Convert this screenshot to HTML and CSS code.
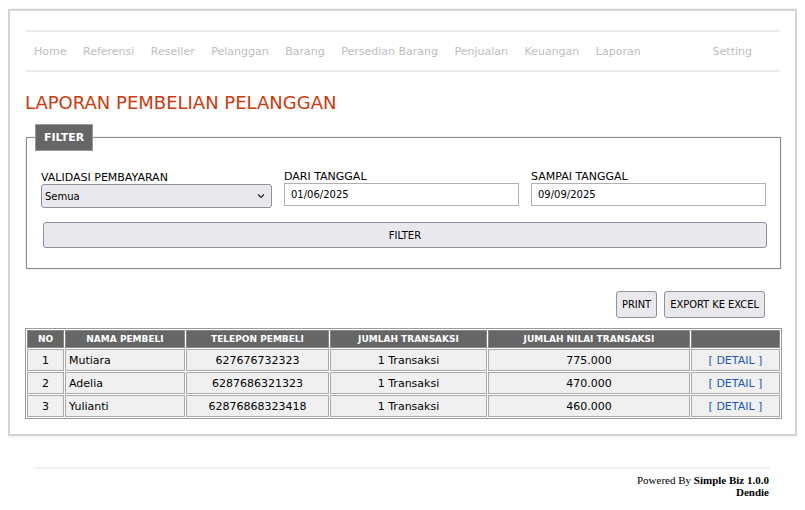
FILE: index.html
```html
<!DOCTYPE html>
<html>
<head>
<meta charset="utf-8">
<link rel="stylesheet" href="styles.css">
</head>
<body>
<div class="page">
  <nav class="nav">
    <a class="nav-item">Home</a>
    <a class="nav-item">Referensi</a>
    <a class="nav-item">Reseller</a>
    <a class="nav-item">Pelanggan</a>
    <a class="nav-item">Barang</a>
    <a class="nav-item">Persedian Barang</a>
    <a class="nav-item">Penjualan</a>
    <a class="nav-item">Keuangan</a>
    <a class="nav-item">Laporan</a>
    <a class="nav-item nav-right">Setting</a>
  </nav>

  <h1 class="title">LAPORAN PEMBELIAN PELANGGAN</h1>

  <fieldset class="filter">
    <legend class="legend">FILTER</legend>
    <div class="filter-grid">
      <label class="field">
        <span class="field-label">VALIDASI PEMBAYARAN</span>
        <span class="select">Semua<svg class="chev" width="8" height="6" viewBox="0 0 8 6"><path d="M1 1.5 L4 4.5 L7 1.5" fill="none" stroke="#222" stroke-width="1.2"/></svg></span>
      </label>
      <label class="field">
        <span class="field-label">DARI TANGGAL</span>
        <span class="input">01/06/2025</span>
      </label>
      <label class="field">
        <span class="field-label">SAMPAI TANGGAL</span>
        <span class="input">09/09/2025</span>
      </label>
    </div>
    <button class="btn btn-wide">FILTER</button>
  </fieldset>

  <div class="actions">
    <button class="btn btn-small">PRINT</button>
    <button class="btn btn-small">EXPORT KE EXCEL</button>
  </div>

  <table class="report">
    <thead>
      <tr>
        <th class="c-no">NO</th>
        <th class="c-nama">NAMA PEMBELI</th>
        <th class="c-tel">TELEPON PEMBELI</th>
        <th class="c-jml">JUMLAH TRANSAKSI</th>
        <th class="c-nilai">JUMLAH NILAI TRANSAKSI</th>
        <th class="c-act"></th>
      </tr>
    </thead>
    <tbody>
      <tr>
        <td class="center">1</td>
        <td>Mutiara</td>
        <td class="center">627676732323</td>
        <td class="center">1 Transaksi</td>
        <td class="center">775.000</td>
        <td class="center"><a class="link">[ DETAIL ]</a></td>
      </tr>
      <tr>
        <td class="center">2</td>
        <td>Adelia</td>
        <td class="center">6287686321323</td>
        <td class="center">1 Transaksi</td>
        <td class="center">470.000</td>
        <td class="center"><a class="link">[ DETAIL ]</a></td>
      </tr>
      <tr>
        <td class="center">3</td>
        <td>Yulianti</td>
        <td class="center">62876868323418</td>
        <td class="center">1 Transaksi</td>
        <td class="center">460.000</td>
        <td class="center"><a class="link">[ DETAIL ]</a></td>
      </tr>
    </tbody>
  </table>
</div>

<footer class="footer">
  <div>Powered By <b>Simple Biz 1.0.0</b></div>
  <div><b>Dendie</b></div>
</footer>
</body>
</html>
```

FILE: styles.css
```css
body {
  margin: 8px;
  font-family: "DejaVu Sans", Verdana, sans-serif;
  font-size: 11px;
  color: #000;
  background: #fff;
}

.page {
  border: 2px solid #d4d4d4;
  box-shadow: 0 0 4px rgba(0,0,0,0.12);
  padding: 19px 15px 15px 15px;
  margin-top: 1px;
}

.nav {
  display: flex;
  align-items: center;
  height: 38px;
  border-top: 2px solid #ececec;
  border-bottom: 2px solid #ececec;
  padding: 0 28px 0 9px;
  gap: 16.5px;
}

.nav-item {
  color: #bdbdbd;
  font-size: 11px;
}

.nav-right {
  margin-left: auto;
}

.title {
  margin: 21px 0 0 0;
  font-size: 18px;
  font-weight: normal;
  color: #cc3a0c;
  line-height: 20px;
}

.filter {
  margin: 11px 0 0 1px;
  border: 1px solid #8a8a8a;
  box-shadow: 0 0 2px rgba(0,0,0,0.15);
  padding: 19px 14px 20px 14px;
}

.legend {
  background: #666;
  color: #fff;
  font-weight: bold;
  font-size: 11px;
  padding: 6px 8px 6px 8px;
  margin-left: -6px;
  border: 1px solid #999;
}

.filter-grid {
  display: grid;
  grid-template-columns: 231px 235px 235px;
  gap: 12px;
  align-items: end;
}

.field {
  display: flex;
  flex-direction: column;
}

.field-label {
  font-size: 11px;
  line-height: 13px;
}

.select {
  display: flex;
  align-items: center;
  justify-content: space-between;
  height: 22px;
  padding: 0 6px 0 3px;
  background: #e9e9ed;
  border: 1px solid #8f8f9d;
  border-radius: 3px;
  font-size: 10px;
  margin-bottom: -2px;
}

.input {
  display: flex;
  align-items: center;
  height: 21px;
  padding: 0 6px;
  border: 1px solid #b0b0b0;
  font-size: 10px;
}

.btn {
  font-family: inherit;
  font-size: 10px;
  background: #e9e9ed;
  border: 1px solid #8f8f9d;
  border-radius: 3px;
  color: #000;
}

.btn-wide {
  display: block;
  width: calc(100% - 1px);
  height: 26px;
  margin: 16px 0 0 2px;
}

.actions {
  display: flex;
  justify-content: flex-end;
  gap: 7px;
  margin: 22px 15px 0 0;
}

.btn-small {
  height: 27px;
  padding: 0 5px;
  font-family: "DejaVu Sans Condensed", "DejaVu Sans", sans-serif;
  font-size: 11px;
}

.report {
  width: 757px;
  margin: 10px 0 0 0;
  border: 1px solid #9a9a9a;
  border-spacing: 1px;
  font-size: 11px;
}

.report th {
  background: #666;
  color: #fff;
  font-size: 9px;
  font-weight: bold;
  height: 16px;
  padding: 0 4px;
  border: 1px solid #888;
}

.report td {
  background: #f0f0f0;
  border: 1px solid #aaa;
  height: 20px;
  padding: 0 3px;
}

.c-no { width: 27px; }
.c-nama { width: 110px; }
.c-tel { width: 133px; }
.c-jml { width: 147px; }
.c-nilai { width: 192px; }

.center { text-align: center; }

.link {
  color: #2255bb;
}

.footer {
  width: 734px;
  margin: 31px auto 0 auto;
  border-top: 2px solid #f0f0f0;
  padding-top: 5px;
  padding-right: 1px;
  text-align: right;
  font-family: "Liberation Serif", "Times New Roman", serif;
  font-size: 11px;
  line-height: 12px;
}
```
